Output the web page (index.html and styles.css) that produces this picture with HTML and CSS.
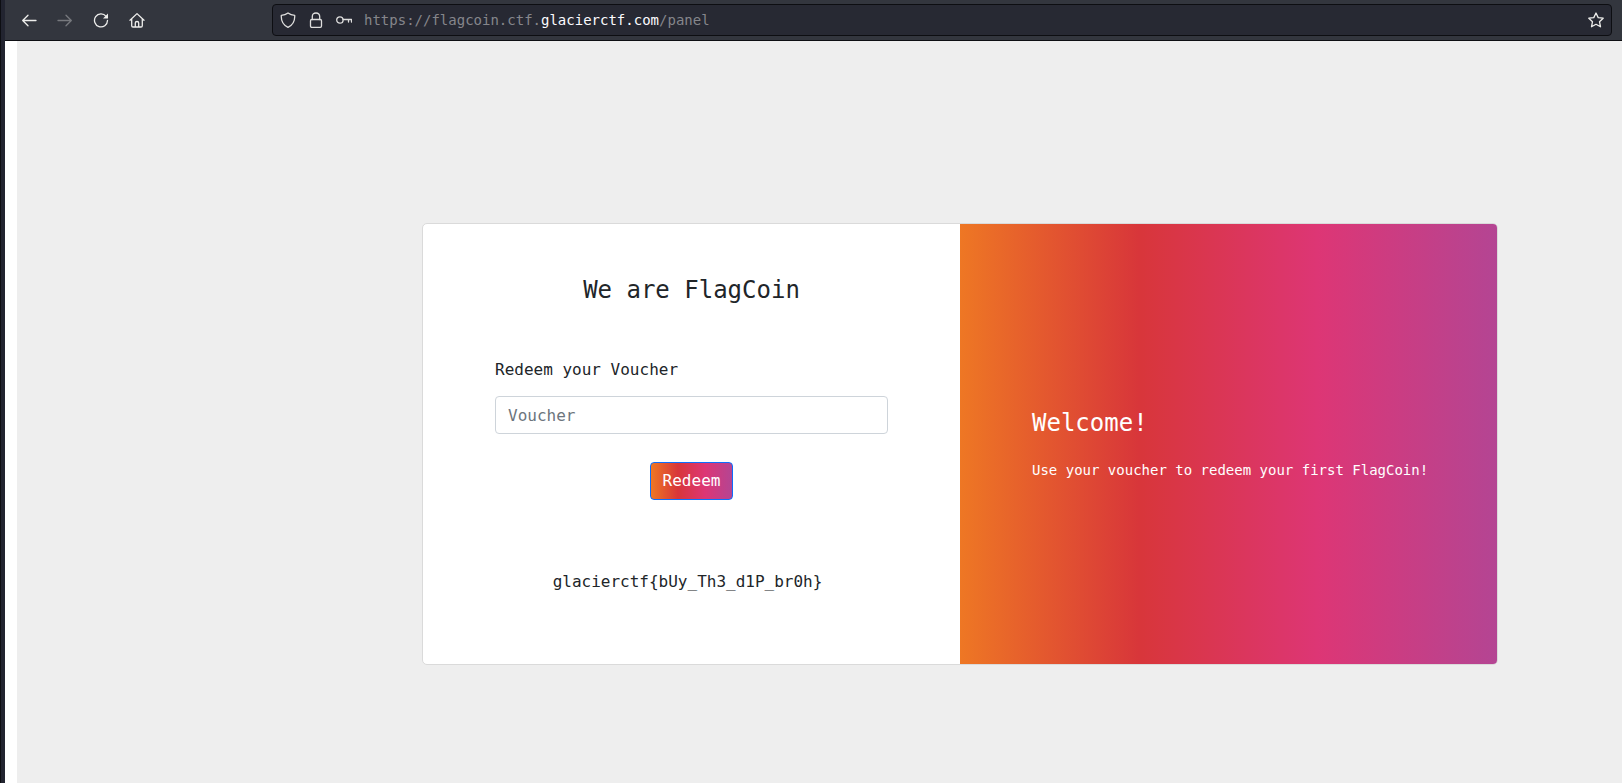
FILE: index.html
```html
<!DOCTYPE html>
<html lang="en">
<head>
<meta charset="utf-8">
<title>FlagCoin</title>
<link rel="stylesheet" href="styles.css">
</head>
<body>
<div class="window">
  <header class="toolbar">
    <nav class="nav-buttons" aria-label="Browser navigation">
      <button class="icon-button" type="button" aria-label="Back">
        <svg viewBox="0 0 16 16"><path d="M15 8.500H1.800M7 3.200L1.700 8.500L7 13.800"/></svg>
      </button>
      <button class="icon-button" type="button" aria-label="Forward" disabled>
        <svg viewBox="0 0 16 16"><path d="M1 8.500H14.200M9 3.200L14.300 8.500L9 13.800"/></svg>
      </button>
      <button class="icon-button" type="button" aria-label="Reload">
        <svg viewBox="0 0 16 16"><path d="M13.100 4.400A6.500 6.500 0 1 0 14.500 8.500"/><path class="solid" d="M15 1.500V6.500H10Z"/></svg>
      </button>
      <button class="icon-button" type="button" aria-label="Home">
        <svg viewBox="0 0 16 16"><path d="M1 8.200L8 1.600L15 8.200M2.700 7V13.700Q2.700 15 4 15H12Q13.300 15 13.300 13.700V7M6.300 15V11Q6.300 9.500 8 9.500T9.700 11V15"/></svg>
      </button>
    </nav>
    <div class="address">
      <svg class="glyph" viewBox="0 0 16 16"><path d="M8 1C6 2.500 3.800 3.200 1.300 3.400C1 8.500 3 13 8 15.300C13 13 15 8.500 14.700 3.400C12.200 3.200 10 2.500 8 1Z"/></svg>
      <svg class="glyph" viewBox="0 0 16 16"><path d="M4.300 7.500V4.600Q4.300 1 8 1T11.700 4.600V7.500"/><rect x="2.500" y="7.500" width="11" height="7.800" rx="1.300"/></svg>
      <svg class="glyph" viewBox="0 0 16 16"><circle cx="3.900" cy="8" r="3.200"/><path d="M7.100 7.500H15.500V10M12.500 7.500V10"/></svg>
      <span class="url"><span>https://flagcoin.ctf.</span><span class="domain">glacierctf.com</span><span>/panel</span></span>
      <button class="icon-button star" type="button" aria-label="Bookmark this page">
        <svg viewBox="0 0 16 16"><path d="M8 1L10.200 5.600L15.200 6.200L11.500 9.700L12.500 14.800L8 12.300L3.500 14.800L4.500 9.700L0.800 6.200L5.800 5.600Z"/></svg>
      </button>
    </div>
  </header>
  <main class="page">
    <div class="card">
      <section class="redeem">
        <h1 class="title">We are FlagCoin</h1>
        <form class="form">
          <label class="label" for="voucher">Redeem your Voucher</label>
          <input class="input" id="voucher" type="text" placeholder="Voucher">
          <button class="submit" type="button">Redeem</button>
        </form>
        <p class="flag">glacierctf{bUy_Th3_d1P_br0h}</p>
      </section>
      <section class="welcome">
        <h2 class="welcome-title">Welcome!</h2>
        <p class="welcome-text">Use your voucher to redeem your first FlagCoin!</p>
      </section>
    </div>
  </main>
</div>
</body>
</html>
```
FILE: styles.css
```css
:root {
  --brand: linear-gradient(to right, #ee7724, #d8363a, #dd3675, #b44593);
  --mono: "DejaVu Sans Mono", "Liberation Mono", monospace;
}

* {
  box-sizing: border-box;
}

body {
  margin: 0;
  color: #212529;
  font: 16px/24px var(--mono);
}

button,
input {
  font: inherit;
}

h1,
h2,
p {
  margin: 0;
  font-weight: 400;
}

.window {
  display: flex;
  flex-direction: column;
  min-height: 100vh;
  padding-left: 4px;
  border-left: 1px solid #0d0e12;
  background: #222430;
}

.toolbar {
  display: flex;
  align-items: center;
  gap: 127px;
  height: 41px;
  padding: 0 10px 0 16px;
  background: #33363e;
  border-bottom: 1px solid #0d0e12;
}

.nav-buttons {
  display: flex;
  gap: 20px;
}

.icon-button {
  width: 16px;
  height: 16px;
  padding: 0;
  border: 0;
  background: none;
  color: #eeeeec;
}

.icon-button:disabled {
  color: #77797e;
}

svg {
  display: block;
  width: 16px;
  height: 16px;
  fill: none;
  stroke: currentColor;
  stroke-width: 1.3;
  stroke-linecap: round;
  stroke-linejoin: round;
}

.solid {
  fill: currentColor;
  stroke: none;
}

.address {
  display: flex;
  flex: 1;
  align-items: center;
  gap: 12px;
  height: 32px;
  padding: 0 7px;
  border: 1px solid #0d0e12;
  border-radius: 4px;
  background: #272933;
}

.glyph {
  flex: none;
  color: #dededd;
}

.url {
  flex: 1;
  color: #85868b;
  font-size: 14px;
}

.domain {
  color: #fbfbfe;
}

.page {
  flex: 1;
  padding: 182px 124px 40px 405px;
  border-left: 12px solid #fff;
  background: #eee;
}

.card {
  display: grid;
  grid-template-columns: 1fr 1fr;
  overflow: hidden;
  border: 1px solid #dadada;
  border-radius: 5px;
  background: #fff;
}

.redeem {
  padding: 48px 72px 70px;
}

.title {
  margin-bottom: 50px;
  font-size: 24px;
  line-height: 36px;
  text-align: center;
}

.form {
  display: flex;
  flex-direction: column;
}

.label {
  margin-bottom: 14px;
}

.input {
  width: 100%;
  height: 38px;
  margin-bottom: 28px;
  padding: 6px 12px;
  border: 1px solid #ced4da;
  border-radius: 4px;
  color: inherit;
}

.input::placeholder {
  color: #6c757d;
  opacity: 1;
}

.submit {
  align-self: center;
  height: 38px;
  padding: 0 12px;
  border: 1px solid #0d6efd;
  border-radius: 4px;
  background: var(--brand);
  color: #fff;
}

.flag {
  margin-top: 70px;
  padding-right: 8px;
  text-align: center;
}

.welcome {
  display: flex;
  flex-direction: column;
  justify-content: center;
  gap: 22px;
  padding: 0 48px 0 72px;
  background: var(--brand);
  color: #fff;
}

.welcome-title {
  font-size: 24px;
  line-height: 30px;
}

.welcome-text {
  font-size: 14px;
  line-height: 20px;
}
```
